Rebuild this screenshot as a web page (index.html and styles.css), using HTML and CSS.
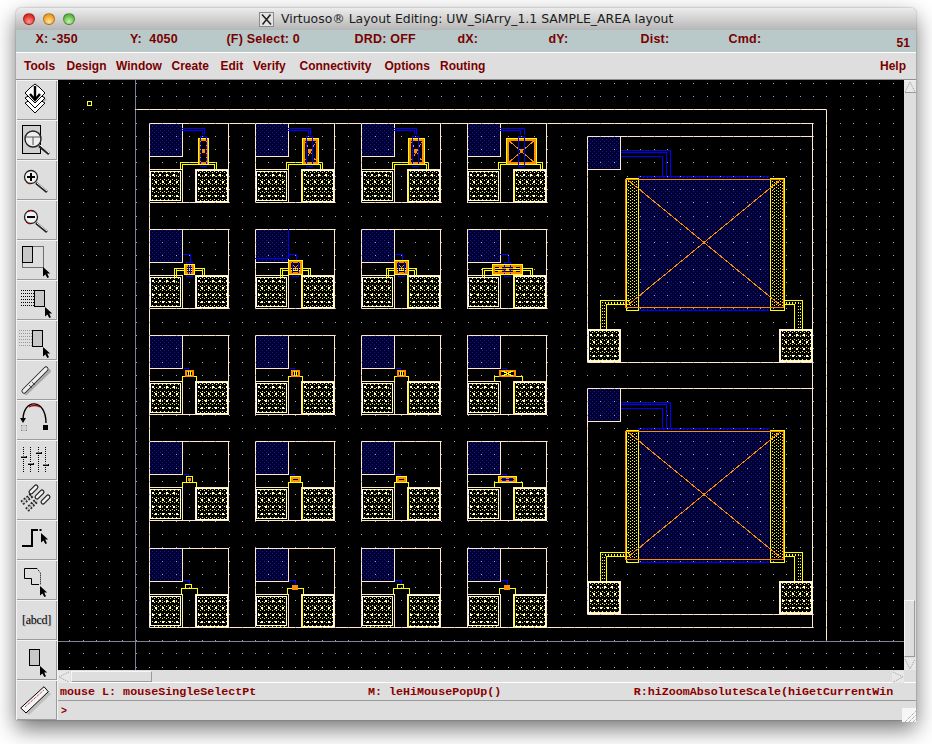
FILE: index.html
```html
<!DOCTYPE html>
<html lang="en">
<head>
<meta charset="utf-8">
<title>Virtuoso Layout Editing</title>
<link rel="stylesheet" href="styles.css">
</head>
<body>
<div class="window">
  <header class="titlebar">
    <div class="lights">
      <span class="light red"></span>
      <span class="light amber"></span>
      <span class="light green"></span>
    </div>
    <svg class="x-icon" width="15" height="15" viewBox="0 0 15 15"><rect x="0.5" y="0.5" width="14" height="14" fill="#e4e4e4" stroke="#8a8a8a"/><path d="M3 2.5 L12 12.5 M11.5 2.5 L3.5 12.5" stroke="#222" stroke-width="1.6" fill="none"/></svg>
    <span class="title">Virtuoso® Layout Editing: UW_SiArry_1.1 SAMPLE_AREA layout</span>
  </header>

  <div class="status">
    <span>X: -350</span><span>Y:&nbsp; 4050</span><span>(F) Select: 0</span><span>DRD: OFF</span><span>dX:</span><span>dY:</span><span>Dist:</span><span>Cmd:</span><span class="count">51</span>
  </div>

  <nav class="menu">
    <span>Tools</span><span>Design</span><span>Window</span><span>Create</span><span>Edit</span><span>Verify</span><span>Connectivity</span><span>Options</span><span>Routing</span><span class="help">Help</span>
  </nav>

  <div class="main">
    <aside class="tools">
      <svg width="0" height="0" class="hidden"><defs>
        <g id="cur"><path d="M0 0V9.5L2.4 7.4L4.3 11L6 10.2L4.2 6.6H7.2Z" fill="#000"/></g>
        <linearGradient id="shade" x1="0" y1="0" x2="1" y2="1"><stop offset="0" stop-color="#555"/><stop offset="1" stop-color="#ddd"/></linearGradient>
      </defs></svg>

      <div class="tool"><svg viewBox="16 80 41 40"><path d="M30 108L47 100L40 93Z" fill="url(#shade)"/><path d="M35 97L45 103L35 113L25 103Z" fill="#fff" stroke="#000"/><path d="M35 92L45 98L35 108L25 98Z" fill="#fff" stroke="#000"/><path d="M31 87L35 84L39 87L45 93L35 103L25 93Z" fill="#fff" stroke="#000"/><path d="M35 86V100M30 94L35 100L40 94" fill="none" stroke="#000" stroke-width="2.4"/></svg></div>

      <div class="tool"><svg viewBox="16 120 41 40"><rect x="22.5" y="125.5" width="18" height="28" fill="#d0d0d0" stroke="#000"/><circle cx="33" cy="139" r="8" fill="#eee" stroke="#222" stroke-width="1.4"/><path d="M25 137H40M33 137V145" stroke="#555"/><path d="M39 146L49 154" stroke="#222" stroke-width="2.6"/><path d="M40 145L49 153" stroke="#fff"/></svg></div>

      <div class="tool"><svg viewBox="16 160 41 40"><circle cx="31" cy="177" r="6.5" fill="#f2f2f2" stroke="#222" stroke-width="1.3"/><path d="M27 177H35M31 173V181" stroke="#000" stroke-width="2"/><path d="M26 182A7 7 0 0 0 30 184" stroke="#a00" fill="none"/><path d="M36 183L47 192" stroke="#222" stroke-width="2.6"/><path d="M37 183L47 191" stroke="#fff"/></svg></div>

      <div class="tool"><svg viewBox="16 200 41 40"><circle cx="31" cy="217" r="6.5" fill="#f2f2f2" stroke="#222" stroke-width="1.3"/><path d="M27 217H35" stroke="#000" stroke-width="2"/><path d="M26 222A7 7 0 0 0 30 224M28 211A7 7 0 0 1 33 211" stroke="#a00" fill="none"/><path d="M36 223L47 232" stroke="#222" stroke-width="2.6"/><path d="M37 223L47 231" stroke="#fff"/></svg></div>

      <div class="tool"><svg viewBox="16 240 41 40"><rect x="22.5" y="246.5" width="21" height="21" fill="none" stroke="#000" stroke-dasharray="1 1"/><rect x="22.5" y="246.5" width="10" height="16" fill="#c8c8c8" stroke="#000"/><use href="#cur" x="43" y="267"/></svg></div>

      <div class="tool"><svg viewBox="16 280 41 40"><path d="M21 290.5H35M21 293.5H35M21 296.5H35M21 299.5H35M21 302.5H35M21 305.5H35" stroke="#000" stroke-dasharray="1 1"/><rect x="34.5" y="290.5" width="10" height="16" fill="#c8c8c8" stroke="#000"/><use href="#cur" x="45" y="307"/></svg></div>

      <div class="tool"><svg viewBox="16 320 41 40"><path d="M19 330.5H33M19 333.5H33M19 336.5H33M19 339.5H33M19 342.5H33M19 345.5H33" stroke="#999" stroke-dasharray="1 1"/><rect x="32.5" y="330.5" width="10" height="16" fill="#c8c8c8" stroke="#000"/><use href="#cur" x="43" y="347"/></svg></div>

      <div class="tool"><svg viewBox="16 360 41 40"><path d="M26 393L49 371" stroke="#aaa" stroke-width="4" stroke-linecap="round"/><path d="M24 391L46 369" stroke="#222" stroke-width="5" stroke-linecap="round"/><path d="M24 391L46 369" stroke="#eee" stroke-width="3.2" stroke-linecap="round"/><path d="M29 385L32 388M32 382L35 385" stroke="#555"/></svg></div>

      <div class="tool"><svg viewBox="16 400 41 40"><path d="M23 420C23 398 46 398 46 423" fill="none" stroke="#000" stroke-width="1.4"/><path d="M29 407C32 405 37 405 40 407" fill="none" stroke="#a00" stroke-width="1.4"/><path d="M20 418H26L23 423Z" fill="#000"/><rect x="21" y="425" width="6" height="6" fill="#888"/><path d="M21 427H27M21 429H27M23 425V431M25 425V431" stroke="#eee"/><rect x="43" y="425" width="5" height="5" fill="#000"/></svg></div>

      <div class="tool"><svg viewBox="16 440 41 40"><path d="M23.5 447V473M30.5 447V473M38.5 447V473M45.5 447V473" stroke="#000" stroke-dasharray="1 1"/><path d="M21 457H27M28 464H34M36 453H42M43 465H49" stroke="#000" stroke-width="2"/><path d="M21 456H26M28 463H33M36 452H41M43 464H48" stroke="#fff"/></svg></div>

      <div class="tool"><svg viewBox="16 480 41 40"><path d="M31 492L36 487M37 497L42 492M43 502L48 497" stroke="#222" stroke-width="5" stroke-linecap="round"/><path d="M31 492L36 487M37 497L42 492M43 502L48 497" stroke="#eee" stroke-width="2.6" stroke-linecap="round"/><path d="M22 503L32 495M27 510L37 500" stroke="#222" stroke-width="5" stroke-dasharray="2 1.5"/><path d="M22 503L32 495M27 510L37 500" stroke="#ccc" stroke-width="2" stroke-dasharray="2 1"/></svg></div>

      <div class="tool"><svg viewBox="16 520 41 40"><path d="M22 546H32V530H36" fill="none" stroke="#000" stroke-width="2"/><path d="M36 530H42" stroke="#000" stroke-width="2" stroke-dasharray="2 1.5"/><use href="#cur" x="41" y="533"/></svg></div>

      <div class="tool"><svg viewBox="16 560 41 40"><path d="M37 568.5H24.5V578.5H31.5V584.5H39" fill="none" stroke="#000"/><path d="M37 568.5L40.5 573V585" fill="none" stroke="#000" stroke-dasharray="1 1"/><use href="#cur" x="40" y="586"/></svg></div>

      <div class="tool abcd"><span>[abcd]</span></div>

      <div class="tool"><svg viewBox="16 640 41 40"><rect x="29.5" y="649.5" width="10" height="16" fill="#c8c8c8" stroke="#000"/><use href="#cur" x="40" y="666"/></svg></div>

      <div class="tool"><svg viewBox="16 680 41 40"><path d="M24 711L47 690L51 694L29 715Z" fill="#aaa" opacity=".6"/><path d="M20.7 708L44 686.7L48.3 691.7L26 713Z" fill="#f4f4f4" stroke="#000"/><path d="M25 707L44 690" stroke="#a00" stroke-dasharray="1 1"/></svg></div>
    </aside>

    <section class="work">
      <div class="work-top">
        <div class="canvas">
          <svg class="layout" width="846" height="590" viewBox="58 80 846 590">
            <defs>
              <g id="pf">
                <path class="ydot" d="M1.5 0V30M3.5 1V30M5.5 0V30M7.5 1V30M9.5 0V30M11.5 1V30M13.5 0V30M15.5 1V30M17.5 0V30M19.5 1V30M21.5 0V30M23.5 1V30M25.5 0V30M27.5 1V30M29.5 0V30"/>
                <path class="wdot" d="M1 4H30M4 11H30M1 18H30M4 25H30"/>
              </g>

              <g id="bf">
                <rect x="1" y="1" width="32" height="32" class="navy"/>
                <path class="bdot" d="M1.5 1V33M3.5 3V33M5.5 1V33M7.5 3V33M9.5 1V33M11.5 3V33M13.5 1V33M15.5 3V33M17.5 1V33M19.5 3V33M21.5 1V33M23.5 3V33M25.5 1V33M27.5 3V33M29.5 1V33M31.5 3V33"/>
              </g>

              <g id="bar">
                <path class="ydense" d="M1.5 0V130M3.5 1V130M5.5 0V130M7.5 1V130M9.5 0V130M11.5 1V130"/>
              </g>

              <g id="cell">
                <use href="#bf"/>
                <rect x="0.5" y="0.5" width="33" height="33" class="cr"/>
                <rect x="0.5" y="0.5" width="79" height="79" class="cr"/>
                <rect x="0.5" y="46.5" width="33" height="33" class="cr"/>
                <rect x="46.5" y="46.5" width="33" height="33" class="cr"/>
                <rect x="1.5" y="48.5" width="30" height="29" class="pad-in"/>
                <rect x="47.5" y="47.5" width="31" height="31" class="pad-in"/>
              </g>
              <g id="cellb">
                <use href="#cell"/>
                <path d="M47.5 48V79" class="yl"/>
              </g>
              <g id="pads">
                <use href="#pf" x="2" y="48"/>
                <use href="#pf" x="48" y="48"/>
              </g>

              <g id="r1">
                <path d="M33 5.5H55.5V12M33 7.5H53.5V12" class="bl"/>
                <path d="M31.5 46V39.5H67.5V46M33.5 46V41.5H65.5V46" class="yl"/>
                <rect x="51.5" y="13.5" width="6" height="30" class="bl"/>
              </g>
              <g id="d11">
                <use href="#r1"/>
                <rect x="49.5" y="15.5" width="10" height="26" class="yl"/>
                <rect x="51" y="17" width="7" height="23" class="or2"/>
                <path d="M51.5 15V41M57.5 15V41" class="bl" stroke-dasharray="3 1"/>
                <rect x="53" y="26" width="3" height="4" fill="#ff8c00"/>
              </g>
              <g id="d12">
                <use href="#r1"/>
                <rect x="47.5" y="15.5" width="16" height="26" class="yl"/>
                <rect x="49" y="17" width="13" height="23" class="or2"/>
                <path d="M49 17L62 40M62 17L49 40" class="or" stroke-dasharray="3 2"/>
                <path d="M51.5 15V41M57.5 15V41" class="bl" stroke-dasharray="3 1"/>
                <rect x="53" y="26" width="3" height="4" fill="#ff8c00"/>
              </g>
              <g id="d14">
                <path d="M33 5.5H57.5V12M33 7.5H53.5V12" class="bl"/>
                <path d="M31.5 46V39.5H75.5V46M33.5 46V41.5H73.5V46" class="yl"/>
                <rect x="39.5" y="15.5" width="30" height="26" class="yl"/>
                <rect x="41" y="17" width="27" height="23" class="or2"/>
                <path d="M41 17L68 40M68 17L41 40" class="or"/>
                <rect x="51.5" y="13.5" width="6" height="30" class="bl"/>
                <rect x="53" y="26" width="3" height="4" fill="#ff8c00"/>
              </g>

              <g id="r2">
                <path d="M25.5 49V39.5H55.5V46M27.5 49V41.5H53.5V46" class="yl"/>
              </g>
              <g id="d21">
                <use href="#r2"/>
                <path d="M34 25.5H41.5V33" class="bl"/>
                <rect x="37.5" y="33.5" width="6" height="14" class="bl"/>
                <rect x="35.5" y="35.5" width="10" height="10" class="yl"/>
                <rect x="37" y="37" width="7" height="7" class="or2"/>
                <path d="M39.5 36V45M41.5 36V45" class="bl"/>
              </g>
              <g id="d22">
                <use href="#r2"/>
                <path d="M34 25.5H41.5V31" class="bl"/>
                <rect x="37.5" y="31.5" width="6" height="16" class="bl"/>
                <rect x="33.5" y="31.5" width="14" height="14" class="yl"/>
                <rect x="35" y="33" width="11" height="11" class="or2"/>
                <path d="M35 33L46 44M46 33L35 44" class="or" stroke-dasharray="2 1"/>
                <path d="M37.5 33V45M43.5 33V45" class="bl" stroke-dasharray="3 1"/>
              </g>
              <g id="d22w">
                <use href="#d22"/>
                <path d="M0 29.5H33.5V0" class="bl"/>
              </g>
              <g id="d24">
                <path d="M15.5 48V39.5H65.5V46M17.5 48V41.5H63.5V46" class="yl"/>
                <path d="M33 25.5H41.5V33" class="bl"/>
                <rect x="37.5" y="33.5" width="6" height="14" class="bl"/>
                <rect x="25.5" y="35.5" width="30" height="10" class="yl"/>
                <rect x="27" y="37" width="27" height="7" class="or2"/>
                <path d="M28 37L53 44M53 37L28 44" class="or"/>
                <path d="M37.5 36V45M43.5 36V45" class="bl" stroke-dasharray="3 1"/>
              </g>

              <g id="d31">
                <path d="M35 33.5H39.5V35" class="bl"/>
                <path d="M33.5 46V41.5H47.5V46" class="yl"/>
                <rect x="37" y="36" width="7" height="5" class="or2"/>
                <path d="M39.5 36V41M41.5 36V41" class="yl"/>
              </g>
              <g id="d34">
                <path d="M27.5 46V41.5H55.5V46" class="yl"/>
                <path d="M35 33.5H39.5V36" class="bl"/>
                <rect x="33" y="36" width="15" height="5" class="or2"/>
                <path d="M35.5 36L45.5 41M45.5 36L35.5 41" class="yl"/>
              </g>
              <g id="d41">
                <path d="M35 33.5H39.5V35" class="bl"/>
                <path d="M33.5 46V41.5H47.5V46" class="yl"/>
                <rect x="37.5" y="35.5" width="6" height="6" class="yl"/>
                <rect x="39" y="37" width="3" height="3" fill="#ff8c00"/>
              </g>
              <g id="d42">
                <path d="M35 33.5H39.5V35" class="bl"/>
                <path d="M33.5 46V41.5H47.5V46" class="yl"/>
                <rect x="35.5" y="35.5" width="10" height="6" class="yl"/>
                <rect x="37" y="37" width="7" height="3" class="or2"/>
              </g>
              <g id="d44">
                <path d="M27.5 46V41.5H55.5V46" class="yl"/>
                <path d="M35 33.5H39.5V35" class="bl"/>
                <rect x="31.5" y="35.5" width="18" height="6" class="yl"/>
                <rect x="33" y="37" width="15" height="3" class="or2"/>
                <path d="M35.5 37L45.5 40M45.5 37L35.5 40" class="bl"/>
              </g>
              <g id="d51">
                <path d="M34 32.5H40.5V37" class="bl"/>
                <path d="M32.5 46V40.5H48.5V46" class="yl"/>
                <rect x="36.5" y="36.5" width="6" height="4" class="yl"/>
              </g>
              <g id="d52">
                <path d="M34 32.5H40.5V37" class="bl"/>
                <path d="M32.5 46V40.5H48.5V46" class="yl"/>
                <rect x="37" y="37" width="6" height="5" fill="#ff8c00"/>
              </g>

              <g id="big">
                <rect x="587.5" y="136.5" width="225" height="225.5" class="cr"/>
                <use href="#bf" x="587" y="136"/>
                <rect x="587.5" y="136.5" width="33" height="33" class="cr"/>
                <path d="M621 150.5H670.5V177M621 152.5H666.5V177M621 156.5H662.5V177" class="bl"/>
                <rect x="638" y="177" width="132" height="133" class="navy"/>
                <path class="bdot" d="M639.5 177V310M641.5 179V310M643.5 177V310M645.5 179V310M647.5 177V310M649.5 179V310M651.5 177V310M653.5 179V310M655.5 177V310M657.5 179V310M659.5 177V310M661.5 179V310M663.5 177V310M665.5 179V310M667.5 177V310M669.5 179V310M671.5 177V310M673.5 179V310M675.5 177V310M677.5 179V310M679.5 177V310M681.5 179V310M683.5 177V310M685.5 179V310M687.5 177V310M689.5 179V310M691.5 177V310M693.5 179V310M695.5 177V310M697.5 179V310M699.5 177V310M701.5 179V310M703.5 177V310M705.5 179V310M707.5 177V310M709.5 179V310M711.5 177V310M713.5 179V310M715.5 177V310M717.5 179V310M719.5 177V310M721.5 179V310M723.5 177V310M725.5 179V310M727.5 177V310M729.5 179V310M731.5 177V310M733.5 179V310M735.5 177V310M737.5 179V310M739.5 177V310M741.5 179V310M743.5 177V310M745.5 179V310M747.5 177V310M749.5 179V310M751.5 177V310M753.5 179V310M755.5 177V310M757.5 179V310M759.5 177V310M761.5 179V310M763.5 177V310M765.5 179V310M767.5 177V310"/>
                <path d="M638 176.5H769M638 310.5H769" class="bl"/>
                <path d="M630 302.5H602.5V330M630 303.5H604.5V330" class="ydash"/>
                <path d="M630 300.5H600.5V331M630 304.5H606.5V331" class="yl"/>
                <path d="M783 302.5H800.5V333M783 303.5H798.5V333" class="ydash"/>
                <path d="M783 300.5H802.5V333H794.5V304.5H783" class="yl"/>
                <use href="#bar" x="627" y="178"/>
                <use href="#bar" x="771" y="178"/>
                <rect x="626.5" y="178.5" width="12" height="132" class="yl"/>
                <rect x="770.5" y="178.5" width="14" height="132" class="yl"/>
                <rect x="625.5" y="179.5" width="158" height="128" class="or"/>
                <path d="M628 180L780 305M780 180L628 305" class="or"/>
                <rect x="588" y="330" width="32" height="31" class="pad-big"/>
                <rect x="780" y="330" width="32" height="31" class="pad-big"/>
                <use href="#pf" x="589" y="331"/>
                <use href="#pf" x="781" y="331"/>
              </g>
            </defs>

            <path d="M135.5 80V670M58 641.5H904" class="gl"/>
            <path d="M135 109.5H826.5V641" class="cr"/>
            <rect x="149.5" y="123.5" width="663" height="504" class="cr"/>

            <use href="#cell" x="149" y="123"/><use href="#cellb" x="255" y="123"/><use href="#cellb" x="361" y="123"/><use href="#cellb" x="467" y="123"/>
            <use href="#cell" x="149" y="229"/><use href="#cellb" x="255" y="229"/><use href="#cellb" x="361" y="229"/><use href="#cellb" x="467" y="229"/>
            <use href="#cell" x="149" y="335"/><use href="#cellb" x="255" y="335"/><use href="#cellb" x="361" y="335"/><use href="#cellb" x="467" y="335"/>
            <use href="#cell" x="149" y="441"/><use href="#cellb" x="255" y="441"/><use href="#cellb" x="361" y="441"/><use href="#cellb" x="467" y="441"/>
            <use href="#cell" x="149" y="548"/><use href="#cellb" x="255" y="548"/><use href="#cellb" x="361" y="548"/><use href="#cellb" x="467" y="548"/>

            <use href="#pads" x="149" y="123"/><use href="#pads" x="255" y="123"/><use href="#pads" x="361" y="123"/><use href="#pads" x="467" y="123"/>
            <use href="#pads" x="149" y="229"/><use href="#pads" x="255" y="229"/><use href="#pads" x="361" y="229"/><use href="#pads" x="467" y="229"/>
            <use href="#pads" x="149" y="335"/><use href="#pads" x="255" y="335"/><use href="#pads" x="361" y="335"/><use href="#pads" x="467" y="335"/>
            <use href="#pads" x="149" y="441"/><use href="#pads" x="255" y="441"/><use href="#pads" x="361" y="441"/><use href="#pads" x="467" y="441"/>
            <use href="#pads" x="149" y="549"/><use href="#pads" x="255" y="549"/><use href="#pads" x="361" y="549"/><use href="#pads" x="467" y="549"/>

            <use href="#d11" x="149" y="123"/><use href="#d12" x="255" y="123"/><use href="#d12" x="361" y="123"/><use href="#d14" x="467" y="123"/>
            <use href="#d21" x="149" y="229"/><use href="#d22w" x="255" y="229"/><use href="#d22" x="361" y="229"/><use href="#d24" x="467" y="229"/>
            <use href="#d31" x="149" y="335"/><use href="#d31" x="255" y="335"/><use href="#d31" x="361" y="335"/><use href="#d34" x="467" y="335"/>
            <use href="#d41" x="149" y="441"/><use href="#d42" x="255" y="441"/><use href="#d42" x="361" y="441"/><use href="#d44" x="467" y="441"/>
            <use href="#d51" x="149" y="548"/><use href="#d52" x="255" y="548"/><use href="#d51" x="361" y="548"/><use href="#d52" x="467" y="548"/>

            <use href="#big"/>
            <use href="#big" y="252"/>

            <rect x="87.5" y="101.5" width="4" height="4" fill="none" stroke="#ffff30"/>

            <path class="dots" d="M56 83.5H904M56 96.5H904M56 109.5H904M56 123.5H904M56 136.5H904M56 149.5H904M56 162.5H904M56 176.5H904M56 189.5H904M56 202.5H904M56 216.5H904M56 229.5H904M56 242.5H904M56 255.5H904M56 269.5H904M56 282.5H904M56 295.5H904M56 308.5H904M56 322.5H904M56 335.5H904M56 348.5H904M56 362.5H904M56 375.5H904M56 388.5H904M56 401.5H904M56 415.5H904M56 428.5H904M56 441.5H904M56 454.5H904M56 468.5H904M56 481.5H904M56 494.5H904M56 507.5H904M56 521.5H904M56 534.5H904M56 547.5H904M56 561.5H904M56 574.5H904M56 587.5H904M56 600.5H904M56 614.5H904M56 627.5H904M56 640.5H904M56 653.5H904M56 667.5H904"/>
          </svg>
        </div>
        <div class="vscroll">
          <svg class="arrow" width="12" height="12" viewBox="0 0 12 12"><path d="M1 11L6 1L11 11" class="arrow-line"/><path d="M1 11.5H12" stroke="#9a9a9a"/></svg>
          <div class="trough"><div class="thumb"></div></div>
          <svg class="arrow" width="12" height="12" viewBox="0 0 12 12"><path d="M1 1L6 11L11 1" class="arrow-line"/></svg>
        </div>
      </div>

      <div class="hscroll">
        <svg class="arrow" width="12" height="12" viewBox="0 0 12 12"><path d="M11 1L1 6L11 11" class="arrow-line"/></svg>
        <div class="htrough"><div class="hthumb"></div></div>
        <svg class="arrow" width="12" height="12" viewBox="0 0 12 12"><path d="M1 1L11 6L1 11" class="arrow-line"/></svg>
        <span class="hgap"></span>
      </div>

      <div class="mouse">
        <span>mouse L: mouseSingleSelectPt</span><span>M: leHiMousePopUp()</span><span>R:hiZoomAbsoluteScale(hiGetCurrentWin</span>
      </div>

      <div class="prompt">
        <span>&gt;</span>
        <svg class="grip" width="14" height="14" viewBox="0 0 14 14"><rect width="14" height="14" fill="#f6f6f6"/><path d="M3 14L14 3M7 14L14 7M11 14L14 11" stroke="#8a8a8a" stroke-dasharray="1 1"/></svg>
      </div>
    </section>
  </div>
</div>
</body>
</html>
```

FILE: styles.css
```css
* { box-sizing: border-box; }
html, body { margin: 0; padding: 0; background: #fff; height: 100%; overflow: hidden; }
body { padding: 8px 0 0 16px; }

.window {
  width: 900px;
  height: 712px;
  display: flex;
  flex-direction: column;
  background: #dedede;
  border-radius: 5px 5px 0 0;
  box-shadow: 0 9px 22px rgba(0,0,0,.55), 0 0 2px rgba(0,0,0,.35);
}

.titlebar {
  height: 22px;
  flex: none;
  display: flex;
  align-items: center;
  padding-left: 7px;
  background: linear-gradient(#ececec, #b6b6b6);
  border-radius: 5px 5px 0 0;
}
.lights { display: flex; gap: 8px; width: 236px; flex: none; }
.light { width: 12px; height: 12px; border-radius: 50%; border: 1px solid rgba(0,0,0,.28); }
.red { background: radial-gradient(circle at 50% 75%, #ff9c94, #e2342c 60%, #b8221c); }
.amber { background: radial-gradient(circle at 50% 75%, #ffe6a0, #f3a42c 60%, #cf8a1e); }
.green { background: radial-gradient(circle at 50% 75%, #c8f2b0, #66c04c 60%, #4a9a36); }
.x-icon { flex: none; margin-right: 7px; }
.title {
  font: 12.45px/20px "DejaVu Sans", sans-serif;
  color: #1c1c1c;
  white-space: nowrap;
}

.status {
  height: 23px;
  flex: none;
  display: grid;
  grid-template-columns: 94.5px 96.5px 128px 103px 91px 92px 88px 168px auto;
  padding-left: 19.5px;
  align-items: start;
  background: #b9c9c9;
  border-bottom: 1px solid #fff;
  font: bold 12.5px/19px "Liberation Sans", sans-serif;
  letter-spacing: .2px;
  color: #7a0000;
}
.status span { white-space: nowrap; }
.status .count { font-size: 12px; line-height: 26px; }

.menu {
  height: 27px;
  flex: none;
  display: grid;
  grid-template-columns: 42.5px 49.5px 55.5px 49px 32.5px 46.5px 85px 55.5px 1fr auto;
  align-items: center;
  padding: 0 10px 0 8px;
  background: #dedede;
  border-bottom: 1px solid #8e8e8e;
  font: bold 12px/26px "Liberation Sans", sans-serif;
  color: #7a0000;
}

.main { flex: 1; display: flex; min-height: 0; }

.tools {
  width: 41px;
  flex: none;
  display: grid;
  grid-auto-rows: 40px;
}
.hidden { position: absolute; }
.tool {
  width: 41px;
  height: 40px;
  background: #dedede;
  box-shadow: inset 1px 1px 0 #f4f4f4, inset -1px -1px 0 #9c9c9c;
}
.tool svg { display: block; width: 41px; height: 40px; }
.abcd {
  display: flex;
  align-items: center;
  justify-content: center;
  font: 12px/40px "Liberation Serif", serif;
  letter-spacing: -0.3px;
  color: #000;
  text-shadow: 1px 1px 0 #c4c4c4;
}

.work { flex: 1; display: flex; flex-direction: column; min-width: 0; border-left: 1px solid #f2f2f2; }
.work-top { height: 590px; flex: none; display: flex; }

.canvas { width: 846px; height: 590px; background: #000; flex: none; }
.layout { display: block; shape-rendering: crispEdges; }
.cr { fill: none; stroke: #ffe9c8; stroke-width: 1; }
.gl { fill: none; stroke: #80808f; stroke-width: 1; }
.yl { fill: none; stroke: #ffff00; stroke-width: 1; }
.or { fill: none; stroke: #ff8c00; stroke-width: 1; }
.or2 { fill: none; stroke: #ff8c00; stroke-width: 2; }
.bl { fill: none; stroke: #0000ff; stroke-width: 1; }
.navy { fill: #000030; stroke: none; }
.pad-in { fill: #000; stroke: #fff; stroke-width: 1; }
.pad-big { fill: #000; stroke: #fff4e0; stroke-width: 2; }
.ydot { fill: none; stroke: #ffff00; stroke-width: 1; stroke-dasharray: 1 3; }
.ydense { fill: none; stroke: #ffff00; stroke-width: 1; stroke-dasharray: 1 2; }
.wdot { fill: none; stroke: #ffffff; stroke-width: 2; stroke-dasharray: 2 5; }
.bdot { fill: none; stroke: #1616a0; stroke-width: 1; stroke-dasharray: 1 3; }
.ydash { fill: none; stroke: #ffff00; stroke-width: 1; stroke-dasharray: 1 2; }
.dots { fill: none; stroke: #a0a0b8; stroke-width: 1; stroke-dasharray: 1 12.28; }

.vscroll {
  width: 12px;
  flex: none;
  display: flex;
  flex-direction: column;
  background: #dedede;
  border-top: 1px solid #eee;
}
.arrow { display: block; flex: none; background: #e8e8e8; }
.arrow-line { fill: none; stroke: #999; stroke-dasharray: 1 1; }
.trough { flex: 1; display: flex; flex-direction: column; justify-content: flex-end; padding-bottom: 1px; }
.thumb { height: 57px; border: 1px solid; border-color: #f6f6f6 #9a9a9a #9a9a9a #f6f6f6; margin-right: 1px; }

.hscroll { height: 13px; flex: none; display: flex; border-bottom: 1px solid #fff; padding-top: 1px; }
.htrough { flex: 1; padding-left: 1px; }
.hthumb { width: 81px; height: 11px; border: 1px solid; border-color: #f6f6f6 #9a9a9a #9a9a9a #f6f6f6; }
.hgap { width: 12px; flex: none; }

.mouse {
  height: 18px;
  flex: none;
  display: grid;
  grid-template-columns: 308px 265.7px auto;
  padding-left: 2px;
  border-bottom: 1px solid #9a9a9a;
  font: bold 11.7px/18px "Liberation Mono", monospace;
  color: #8a0000;
  white-space: pre;
}

.prompt {
  flex: 1;
  display: flex;
  justify-content: space-between;
  align-items: flex-end;
  padding-left: 3px;
  font: bold 10px/21px "Liberation Mono", monospace;
  color: #8a0000;
}
.prompt span { align-self: flex-start; }
.grip { display: block; }
```
